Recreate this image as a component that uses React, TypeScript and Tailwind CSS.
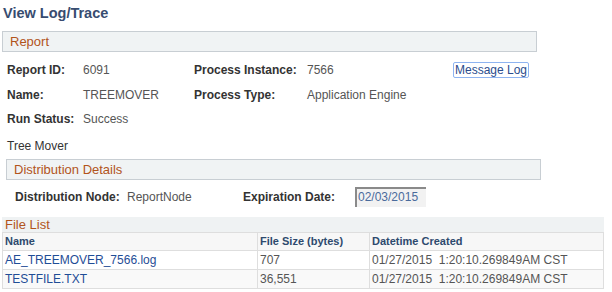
import React from 'react';

const files = [
  { name: 'AE_TREEMOVER_7566.log', size: '707', created: '01/27/2015  1:20:10.269849AM CST' },
  { name: 'TESTFILE.TXT', size: '36,551', created: '01/27/2015  1:20:10.269849AM CST' },
];

const Label: React.FC<{ children: React.ReactNode; w: string }> = ({ children, w }) => (
  <div className={`${w} font-bold text-[#333333] shrink-0`}>{children}</div>
);

const App: React.FC = () => {
  return (
    <div
      className="w-[612px] h-[292px] bg-white overflow-hidden text-[12px]"
      style={{ fontFamily: '"Liberation Sans", Arial, sans-serif' }}
    >
      <h1 className="pl-[3px] pt-[4px] h-[31px] text-[14.5px] font-bold text-[#374c70] leading-[18px]">
        View Log/Trace
      </h1>

      <div className="ml-[2px] w-[535px] h-[21px] bg-[#f0f3f4] border border-[#c8ced3] pl-[7px] text-[13px] leading-[19px] text-[#b2541c]">
        Report
      </div>

      <div className="pl-[7px] pt-[10px] text-[#555555]">
        <div className="flex items-center h-[16px]">
          <Label w="w-[76px]">Report ID:</Label>
          <div className="w-[111px]">6091</div>
          <Label w="w-[113px]">Process Instance:</Label>
          <div className="w-[146px]">7566</div>
          <div className="h-[16px] px-[1px] border border-[#8fb4f0] rounded-[2px] text-[#2b4c8c] leading-[14px]">
            Message Log
          </div>
        </div>
        <div className="flex items-center h-[16px] mt-[9px]">
          <Label w="w-[76px]">Name:</Label>
          <div className="w-[111px]">TREEMOVER</div>
          <Label w="w-[113px]">Process Type:</Label>
          <div>Application Engine</div>
        </div>
        <div className="flex items-center h-[16px] mt-[8px]">
          <Label w="w-[76px]">Run Status:</Label>
          <div>Success</div>
        </div>
        <div className="h-[16px] mt-[11px] text-[#333333] leading-[16px]">Tree Mover</div>
      </div>

      <div className="ml-[6px] mt-[5px] w-[535px] h-[21px] bg-[#f0f3f4] border border-[#c8ced3] pl-[7px] text-[13px] leading-[19px] text-[#b2541c]">
        Distribution Details
      </div>

      <div className="flex items-center pl-[15px] mt-[6px] h-[22px] text-[#555555]">
        <Label w="w-[112px]">Distribution Node:</Label>
        <div className="w-[116px]">ReportNode</div>
        <Label w="w-[112px]">Expiration Date:</Label>
        <div className="w-[71px] h-[20px] bg-[#f2f2f2] border-t-2 border-l-2 border-t-[#8a8a8a] border-l-[#8a8a8a] pl-[1px] leading-[17px] text-[#4a6b9c]">
          02/03/2015
        </div>
      </div>

      <div className="ml-[2px] mt-[9px] w-[602px]">
        <div className="h-[15px] bg-[#eff2f3] pl-[3px] text-[13px] leading-[15px] text-[#b2541c]">File List</div>
        <table className="w-full border-collapse text-[12px]">
          <thead>
            <tr className="h-[18px] bg-[#f7f7f7] text-[11px]">
              <th className="w-[255px] border border-[#dedede] pl-[2px] text-left font-bold text-[#2e4a6e]">Name</th>
              <th className="w-[112px] border border-[#dedede] pl-[2px] text-left font-bold text-[#2e4a6e]">File Size (bytes)</th>
              <th className="border border-[#dedede] pl-[2px] text-left font-bold text-[#2e4a6e]">Datetime Created</th>
            </tr>
          </thead>
          <tbody>
            {files.map((f, i) => (
              <tr key={f.name} className={`h-[19px] ${i % 2 === 1 ? 'bg-[#f9f9f9]' : 'bg-white'}`}>
                <td className="border border-[#dedede] pl-[2px] text-[#1f4d96] whitespace-nowrap">{f.name}</td>
                <td className="border border-[#dedede] pl-[2px] text-[#555555]">{f.size}</td>
                <td className="border border-[#dedede] pl-[2px] text-[#555555] whitespace-pre">{f.created}</td>
              </tr>
            ))}
          </tbody>
        </table>
      </div>
    </div>
  );
};

export default App;
